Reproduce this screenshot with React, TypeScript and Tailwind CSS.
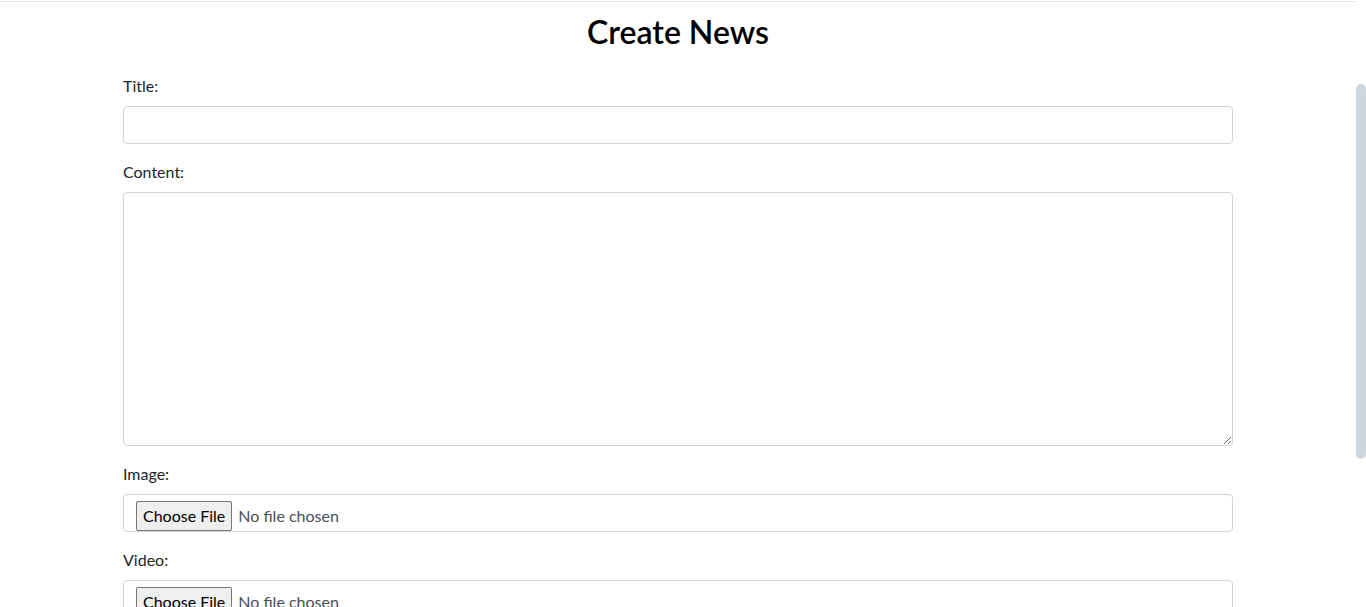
import { useState } from "react";

const CreateNews = () => {
  // form state
  const [title, setTitle] = useState("");
  const [content, setContent] = useState("");

  const handleSubmit = (e: React.FormEvent) => {
    e.preventDefault();
    console.log({ title, content });
  };

  return (
    <div className="mx-auto w-[1110px]">
      <h2 className="mt-[11px] mb-[23px] text-center text-[32px] font-semibold leading-[1.2] text-black">
        Create News
      </h2>
      <form onSubmit={handleSubmit}>
        <div className="mb-4">
          <label className="mb-2 block text-base leading-6">Title:</label>
          <input
            type="text"
            value={title}
            onChange={(e) => setTitle(e.target.value)}
            className="block h-[38px] w-full rounded-[4px] border border-[#ced4da] px-3 py-1.5 text-[#495057] outline-none"
          />
        </div>
        <div className="mb-4">
          <label className="mb-2 block text-base leading-6">Content:</label>
          <textarea
            rows={10}
            value={content}
            onChange={(e) => setContent(e.target.value)}
            className="block h-[254px] w-full rounded-[4px] border border-[#ced4da] px-3 py-1.5 text-[#495057] outline-none"
          />
        </div>
        <div className="mb-4">
          <label className="mb-2 block text-base leading-6">Image:</label>
          <input
            type="file"
            accept="image/*"
            className="block h-[38px] w-full rounded-[4px] border border-[#ced4da] px-3 pt-[6px] pb-0 text-[#495057] file:mr-[6px] file:h-[30px] file:rounded-[2px] file:border file:border-[#767676] file:bg-[#efefef] file:px-[6px] file:text-black"
          />
        </div>
        <div className="mb-4">
          <label className="mb-2 block text-base leading-6">Video:</label>
          <input
            type="file"
            accept="video/*"
            className="block h-[38px] w-full rounded-[4px] border border-[#ced4da] px-3 pt-[6px] pb-0 text-[#495057] file:mr-[6px] file:h-[30px] file:rounded-[2px] file:border file:border-[#767676] file:bg-[#efefef] file:px-[6px] file:text-black"
          />
        </div>
      </form>
    </div>
  );
};

export default function App() {
  return (
    <div className="flex h-[607px] overflow-hidden bg-white font-['Lato','Open_Sans',sans-serif] text-[#212529]">
      <div className="min-w-0 flex-1">
        <div className="h-[2px] border-b border-[#e0e0e0]" />
        <CreateNews />
      </div>
      {/* page scrollbar */}
      <div className="w-[10px] pt-[84px]">
        <div className="h-[375px] rounded-full bg-[#cdd6df]" />
      </div>
    </div>
  );
}
